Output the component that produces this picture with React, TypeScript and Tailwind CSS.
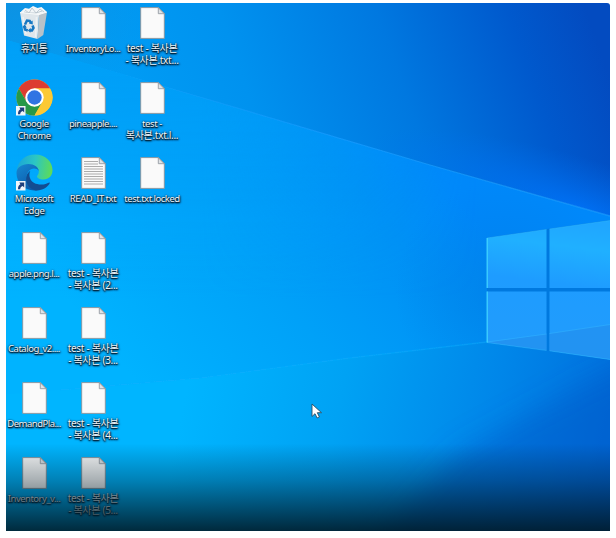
import React from "react";

type Kind = "bin" | "chrome" | "edge" | "file" | "text";
type Entry = { kind: Kind; lines: { text: string; track: string }[] };

const K = "text-[10px] tracking-[-0.3px]";
const M = "text-[9.5px] tracking-[-0.4px]";
const L = "text-[9.5px] tracking-[-0.5px]";

const columns: Entry[][] = [
  [
    { kind: "bin", lines: [{ text: "휴지통", track: K }] },
    { kind: "chrome", lines: [{ text: "Google", track: M }, { text: "Chrome", track: M }] },
    { kind: "edge", lines: [{ text: "Microsoft", track: M }, { text: "Edge", track: M }] },
    { kind: "file", lines: [{ text: "apple.png.l...", track: L }] },
    { kind: "file", lines: [{ text: "Catalog_v2....", track: L }] },
    { kind: "file", lines: [{ text: "DemandPla...", track: L }] },
    { kind: "file", lines: [{ text: "Inventory_v...", track: L }] },
  ],
  [
    { kind: "file", lines: [{ text: "InventoryLo...", track: L }] },
    { kind: "file", lines: [{ text: "pineapple....", track: L }] },
    { kind: "text", lines: [{ text: "READ_IT.txt", track: M }] },
    { kind: "file", lines: [{ text: "test - 복사본", track: K }, { text: "- 복사본 (2...", track: K }] },
    { kind: "file", lines: [{ text: "test - 복사본", track: K }, { text: "- 복사본 (3...", track: K }] },
    { kind: "file", lines: [{ text: "test - 복사본", track: K }, { text: "- 복사본 (4...", track: K }] },
    { kind: "file", lines: [{ text: "test - 복사본", track: K }, { text: "- 복사본 (5...", track: K }] },
  ],
  [
    { kind: "file", lines: [{ text: "test - 복사본", track: K }, { text: "- 복사본.txt...", track: K }] },
    { kind: "file", lines: [{ text: "test -", track: M }, { text: "복사본.txt.l...", track: K }] },
    { kind: "file", lines: [{ text: "test.txt.locked", track: L }] },
  ],
];

function FileIcon({ lined }: { lined?: boolean }) {
  return (
    <svg className="h-8 w-[25px]" viewBox="0 0 25 32">
      <path d="M.7.6h17.8l5.8 5.9v24.9H.7z" fill="#fafafa" stroke="#8b9299" strokeWidth=".9" />
      <path d="M18.3.8v5.9h5.9z" fill="#dfe3e6" stroke="#8b9299" strokeWidth=".8" />
      {lined && (
        <path
          d="M3 4.500h14M3 7h14M3 9.500h19M3 12h19M3 14.500h19M3 17h19M3 19.500h19M3 22h19M3 24.500h19M3 27h19"
          stroke="#a3a3a3"
          strokeWidth=".9"
        />
      )}
    </svg>
  );
}

function Shortcut() {
  return (
    <g>
      <rect x="0" y="27" width="9.5" height="9.5" fill="#f2f6fa" />
      <path d="M2 35.200c0-3 .8-4.300 2.400-5L3.300 28.400H8.200V33.500L6.700 32.100C5 32.700 4.300 33.600 4.200 35.200z" fill="#1f3f7c" />
    </g>
  );
}

function BinIcon() {
  return (
    <svg className="h-9 w-9" viewBox="0 0 36 36">
      <path d="M5 6.500 9 3l4 .8L17 1l4.500 2 4-1 5 4.500-2 3-4 2H6z" fill="#f3f6f8" />
      <path d="m9 5 4 3 3-5 4 5 4-4 4 3M8 7l5 1 7 0 6-2" fill="none" stroke="#b9c5cd" strokeWidth=".9" />
      <path d="M4 7.500 23 9.500l-1.500 24.500L8 30.500z" fill="#dfe6eb" />
      <path d="m7 12 3 17M20.500 12l-1 20" stroke="#f4f7f9" strokeWidth="1.500" opacity=".7" />
      <path d="M23 9.500 31 7l-3.700 23-5.800 4z" fill="#b8c2c9" />
      <path d="M4 7.500 23 9.500 31 7" fill="none" stroke="#f8fafb" strokeWidth="1" />
      <g fill="none" stroke="#1677c2" strokeWidth="2.500">
        <path d="m9 19.500 2-4 2.700.3 1.300 2.200" />
        <path d="m16.500 20.500 1 2.500-1.500 2.500-2.200-.1" />
        <path d="m11.800 25.500-2.800-1-.8-3" />
      </g>
      <path d="m13 18.500 3.800.9-.2-4zM14.700 22.800l-2.800 2.700 2.500 2.200zM6.200 22.200l2.600-3 2 3.500z" fill="#1677c2" />
    </svg>
  );
}

function ChromeIcon() {
  return (
    <svg className="h-[37px] w-[37px]" viewBox="0 0 37 37">
      <circle cx="18.5" cy="18.5" r="18" fill="#fcc934" />
      <path d="M2.900 9.500A18 18 0 0 1 34.100 9.500H18.500L10.700 23Z" fill="#dd3c30" />
      <path d="M2.900 9.500 10.700 23 18.500 27.500 26.300 23 18.500 36.500A18 18 0 0 1 2.900 9.500Z" fill="#279848" />
      <path d="M18.500 9.500H34.100A18 18 0 0 1 18.500 36.500L26.300 23Z" fill="#fcc934" />
      <circle cx="18.5" cy="18.5" r="9.200" fill="#fff" />
      <circle cx="18.5" cy="18.5" r="7.200" fill="#2f74e3" />
      <Shortcut />
    </svg>
  );
}

function EdgeIcon() {
  return (
    <svg className="h-[37px] w-[37px]" viewBox="0 0 37 37">
      <defs>
        <linearGradient id="edgeTop" x1="0" y1=".4" x2="1" y2=".5">
          <stop offset="0" stopColor="#1ba5d8" />
          <stop offset=".5" stopColor="#2bc6c4" />
          <stop offset="1" stopColor="#5fdc55" />
        </linearGradient>
        <linearGradient id="edgeBody" x1="0" y1="0" x2=".6" y2="1">
          <stop offset="0" stopColor="#1688d2" />
          <stop offset="1" stopColor="#0c5aa9" />
        </linearGradient>
      </defs>
      <path d="M.6 17C2 6 10 .5 19 .5c10.500 0 17.500 7.500 17.500 15.500 0 6-4 9.500-9 9.500-4 0-6.500-1.500-6.500-3 0-1 1.800-1.900 1.800-4.800 0-4-4-7-9.200-7C7.500 10.700 2.500 13.300.6 17Z" fill="url(#edgeTop)" />
      <path d="M.5 19c0-5.500 5.500-9 12-9 5.500 0 10 3 10.300 7-1-2-3-2.600-4.800-2.600-4 0-7.500 4-7.500 9 0 6.500 4.500 11.500 11 12.800C9.500 38 .5 29.500.5 19Z" fill="url(#edgeBody)" />
      <path d="M14.200 17c-2 4.500-.5 13.500 11 13.500 3.200 0 6-1 7.500-1.800.8-.4 1.300.2.900.9C31 34 25.500 37 19.800 36.400 9 34 7.500 21 14.200 17Z" fill="#134c91" />
      <Shortcut />
    </svg>
  );
}

function Icon({ kind }: { kind: Kind }) {
  if (kind === "bin") return <BinIcon />;
  if (kind === "chrome") return <ChromeIcon />;
  if (kind === "edge") return <EdgeIcon />;
  return <FileIcon lined={kind === "text"} />;
}

function DesktopItem({ item }: { item: Entry }) {
  return (
    <div className="flex h-[75px] w-[59px] flex-col items-center">
      <div className="flex h-[39px] items-center justify-center">
        <Icon kind={item.kind} />
      </div>
      <div className="mt-px flex flex-col items-center leading-[11.5px] whitespace-pre text-[#edf5fa] [text-shadow:0_1px_1px_#001c30,1px_1px_2px_#002238,0_0_2px_#003a5c,0_1px_2px_#00304c]">
        {item.lines.map((line) => (
          <span key={line.text} className={line.track}>
            {line.text}
          </span>
        ))}
      </div>
    </div>
  );
}

function Wallpaper() {
  return (
    <svg className="absolute inset-0 h-full w-full" viewBox="6 3 604 528" preserveAspectRatio="none">
      <defs>
        <linearGradient id="sky" gradientUnits="userSpaceOnUse" x1="110" y1="150" x2="580" y2="-10">
          <stop offset="0" stopColor="#009ff6" />
          <stop offset=".3" stopColor="#0092ef" />
          <stop offset=".6" stopColor="#0078e0" />
          <stop offset=".85" stopColor="#0059cd" />
          <stop offset="1" stopColor="#034bc0" />
        </linearGradient>
        <radialGradient id="topLeft" gradientUnits="userSpaceOnUse" cx="6" cy="-20" r="150">
          <stop offset="0" stopColor="#1a86d0" stopOpacity=".6" />
          <stop offset="1" stopColor="#1288d8" stopOpacity="0" />
        </radialGradient>
        <linearGradient id="beam" gradientUnits="userSpaceOnUse" x1="130" y1="375" x2="410" y2="140">
          <stop offset="0" stopColor="#00b3ff" />
          <stop offset=".45" stopColor="#00a1f8" />
          <stop offset=".8" stopColor="#0090f5" />
          <stop offset="1" stopColor="#0088fa" />
        </linearGradient>
        <linearGradient id="beamLeft" gradientUnits="userSpaceOnUse" x1="0" y1="20" x2="0" y2="300">
          <stop offset="0" stopColor="#009ff6" />
          <stop offset=".3" stopColor="#00a0f8" stopOpacity=".7" />
          <stop offset="1" stopColor="#00a8ff" stopOpacity="0" />
        </linearGradient>
        <linearGradient id="beamFade" gradientUnits="userSpaceOnUse" x1="200" y1="0" x2="480" y2="0">
          <stop offset="0" stopColor="#fff" />
          <stop offset="1" stopColor="#000" />
        </linearGradient>
        <mask id="leftOnly" maskUnits="userSpaceOnUse" x="0" y="0" width="620" height="540">
          <rect width="620" height="540" fill="url(#beamFade)" />
        </mask>
        <linearGradient id="ground" gradientUnits="userSpaceOnUse" x1="190" y1="370" x2="620" y2="455">
          <stop offset="0" stopColor="#00b5ff" />
          <stop offset=".35" stopColor="#00a2f4" />
          <stop offset=".7" stopColor="#0086e9" />
          <stop offset="1" stopColor="#006cdb" />
        </linearGradient>
        <radialGradient id="glow" gradientUnits="userSpaceOnUse" cx="0" cy="0" r="1" gradientTransform="translate(580 208) rotate(17) scale(220 50)">
          <stop offset="0" stopColor="#0077ff" stopOpacity=".75" />
          <stop offset="1" stopColor="#0070f0" stopOpacity="0" />
        </radialGradient>
        <radialGradient id="shade" gradientUnits="userSpaceOnUse" cx="505" cy="290" r="110">
          <stop offset="0" stopColor="#0076d6" stopOpacity=".4" />
          <stop offset="1" stopColor="#0078dc" stopOpacity="0" />
        </radialGradient>
        <linearGradient id="ray" gradientUnits="userSpaceOnUse" x1="60" y1="0" x2="330" y2="0">
          <stop offset="0" stopColor="#22a5ff" stopOpacity="0" />
          <stop offset="1" stopColor="#1a9cff" stopOpacity=".65" />
        </linearGradient>
        <linearGradient id="pane" gradientUnits="userSpaceOnUse" x1="600" y1="225" x2="585" y2="350">
          <stop offset="0" stopColor="#20a6ff" />
          <stop offset=".2" stopColor="#20b0ff" />
          <stop offset=".5" stopColor="#1e9cff" />
          <stop offset="1" stopColor="#219cfc" />
        </linearGradient>
        <filter id="soft" x="-30%" y="-30%" width="160%" height="160%">
          <feGaussianBlur stdDeviation="14" />
        </filter>
        <filter id="fine" x="-5%" y="-5%" width="110%" height="110%">
          <feGaussianBlur stdDeviation=".7" />
        </filter>
      </defs>
      <rect width="620" height="540" fill="url(#sky)" />
      <rect width="300" height="200" fill="url(#topLeft)" />
      <path d="M0 0H620V219L380 149Z" fill="url(#glow)" />
      <path d="M0 38 200 97 430 165 610 216V540H0Z" fill="url(#beam)" />
      <path d="M0 38 200 97 430 165 610 216V540H0Z" fill="url(#beamLeft)" mask="url(#leftOnly)" />
      <path d="M395 175H610V400H395Z" fill="url(#shade)" />
      <path d="M0 395 200 378 350 358 487 342 610 324V540H0Z" fill="url(#ground)" />
      <path d="m650 352-80 40-110 60-110 120h300z" fill="#0050c2" fillOpacity=".42" filter="url(#soft)" />
      <path d="M30 47 200 97 430 165 610 216" fill="none" stroke="url(#ray)" strokeWidth="1.300" filter="url(#fine)" />
      <path d="M60 390 200 378 350 358 487 342" fill="none" stroke="#12b0ff" strokeWidth="1.500" strokeOpacity=".4" filter="url(#fine)" />
      <path d="M487 237.500 610 220V359.500L487 342.500Z" fill="#0079df" />
      <path d="m487 238 59.500-8.500V288H487zM549.500 229l60.500-8.500V288h-60.500zM487 291.500h59.500v58.800L487 342.500zM549.500 291.500H610V359.500l-60.500-8.800z" fill="url(#pane)" />
      <path d="m487 342.500 59.500-8.500v16.300zM549.500 333.500 610 324.500v35l-60.500-8.800z" fill="#2490ee" fillOpacity=".7" />
      <path d="m487 342 59.500-8M549.500 333.500 610 324.500" stroke="#30b0ff" strokeOpacity=".6" />
      <path d="m487 238 59.500-8.500M549.500 229l60.500-8.500M487 342.500l59.500 8M549.500 350.800l60.500 8.700" stroke="#30b8ff" strokeOpacity=".55" />
      <path d="M487.200 238v50M487.200 291.500v51" stroke="#3fd2ff" strokeWidth="1.300" />
    </svg>
  );
}

export default function App() {
  return (
    <div className="h-[538px] w-[616px] overflow-hidden bg-white pt-[3px] pl-[6px] font-['Noto_Sans','Noto_Sans_CJK_KR',sans-serif]">
      <main className="relative h-[528px] w-[604px] overflow-hidden rounded-tr-[3px]">
        <Wallpaper />
        <div className="relative -ml-[1.5px] flex">
          {columns.map((items, i) => (
            <div key={i} className="flex flex-col">
              {items.map((item, j) => (
                <DesktopItem key={j} item={item} />
              ))}
            </div>
          ))}
        </div>
        <div className="absolute inset-x-0 bottom-0 h-[92px] bg-linear-to-b from-[#001722]/0 from-5% via-[#001722]/33 via-45% to-[#001722]/88" />
        <svg className="absolute top-[400px] left-[305px] h-4 w-3" viewBox="0 0 12 16">
          <path d="M1 1v12.500l3-2.800 2.100 4.300 2.300-1.100-2.100-4.200h4.200z" fill="#fff" stroke="#294c61" strokeWidth=".9" />
        </svg>
      </main>
    </div>
  );
}
